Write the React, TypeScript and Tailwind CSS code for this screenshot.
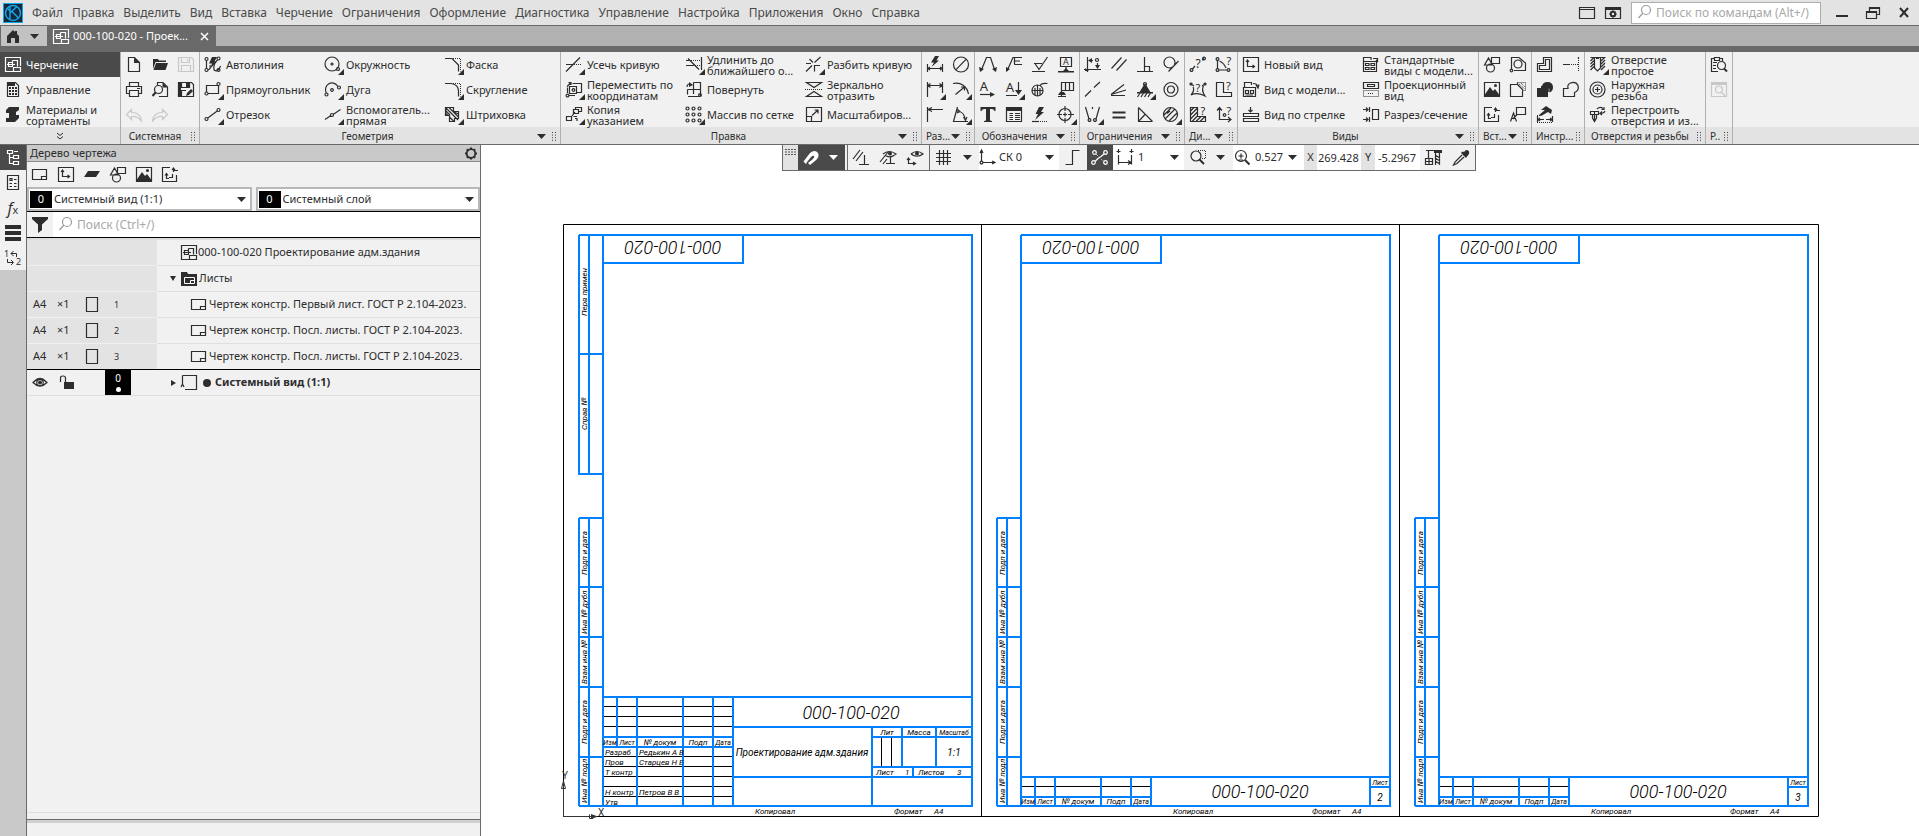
import { useState } from 'react';
import type { ReactNode } from 'react';

interface Glyph {
  s?: string; // stroked
  f?: string; // filled
  d?: string; // dotted
  b?: string; // bold stroke
  t?: { x: number; y: number; v: string; size: number }; // letter inside the icon
}

// circle as a sub-path
const o = (x: number, y: number, r: number) =>
  `M${x - r} ${y}a${r} ${r} 0 1 0 ${2 * r} 0a${r} ${r} 0 1 0 ${-2 * r} 0z`;

// every glyph lives on an 18x17 grid
const glyphs: Record<string, Glyph> = {
  drawing: {
    s: 'M16.5 10V1.5H1.5V15.5H9.5M9.5 11.5H16.5V15.5H9.5zM8.5 4.5H13.5V10.5M8.5 4.5V10.5H4.5V6.5H8.5M3 8.5H11M9.5 11.5V15.5',
  },
  management: {
    s: 'M3.5 1.5H11.5L14.5 4.5V15.5H3.5z',
    f: 'M4 2h7v3H4zM5 6h2v2H5zM8 6h2v2H8zM11 6h2v2h-2zM5 9h2v2H5zM8 9h2v2H8zM11 9h2v2h-2zM5 12h2v2H5zM8 12h2v2H8zM11 12h2v2h-2z',
  },
  materials: { f: 'M5 1H15V4L12 6V9H15V12L11 16H2V12H5V7H2V4z' },
  file: { s: 'M3.5 1.5H9.5L14.5 6.5V15.5H3.5z', f: 'M9 1.5L15 7H9z' },
  open: { f: 'M2 3H7L8 4.5H15V6H4.5L2 13zM5 7H17L14.5 14H2.5z' },
  save: { s: 'M1.5 1.5H14.5L16.5 3.5V15.5H1.5zM4.5 1.5V6.5H12.5V1.5M4.5 15.5V9.5H13.5V15.5M10.5 3V5' },
  saveas: {
    s: 'M1.5 1.5H14.5L16.5 3.5V15.5H1.5zM4.5 1.5V6.5H12.5V1.5M4.5 15.5V9.5H9',
    f: 'M9 2h3v4H9zM9 15l1-3 4-4 2 2-4 4zM2 2h2v13H2z',
  },
  print: { s: 'M4.5 5V1.5H13.5V5M4.5 12.5H1.5V5.5H16.5V12.5H13.5M4.5 9.5H13.5V15.5H4.5zM12 7.5H15' },
  preview: { s: 'M6.5 4V1.5H12L16.5 6V15.5H8' + o(7.5, 8.5, 4), b: 'M4.5 11.5L1.5 15', f: 'M11.5 1.5L16.5 6.5H11.5z' },
  undo: { s: 'M6.5 3.5L1.5 8.5L6.5 13.5V10.5C11 10 14 12 16.5 15C16 9 12 6.5 6.5 6.5z' },
  redo: { s: 'M11.5 3.5L16.5 8.5L11.5 13.5V10.5C7 10 4 12 1.5 15C2 9 6 6.5 11.5 6.5z' },
  autoline: {
    s: o(2.5, 3, 1.5) + o(2.5, 14, 1.5) + o(14.5, 2.5, 1.5) + o(14.5, 14, 1.5) + 'M2.5 4.5V12.5M4 14Q7 13 6 9M13.5 4Q9 8 10 14Q14 17 16.5 10',
    f: 'M8 1H13L10.5 5.5H13L6 13L8 7.5H5z',
  },
  rectangle: { s: 'M2.5 11V4.5H13M14.5 5V12.5H4' + o(14.5, 3, 1.5) + o(2.5, 12.5, 1.5) },
  segment: { s: 'M3.8 12L13.2 5' + o(14.5, 4, 1.5) + o(2.5, 13, 1.5) },
  circle: { s: o(8, 8, 7) + o(8, 8, 1) + o(14, 13, 1.5) },
  arc: { s: 'M2.5 12A6.5 6.5 0 0 1 13.5 5' + o(8, 9, 1.3) + o(2.5, 13.5, 1.5) + o(15, 6.5, 1.5) },
  auxline: { s: 'M1 13.5L6.5 9.8M9.5 8.2L16.5 3.5' + o(8, 9, 1.5) },
  chamfer: { s: 'M1 2.5H8L14.5 9V15.5', d: 'M9 2.5H16.5V15.5' },
  fillet: { s: 'M1 2.5H7Q14.5 3.5 14.5 10V15.5', d: 'M9 2.5H16.5V15.5' },
  hatch: {
    s: 'M1.5 1.5H9.5V5.5H14.5V12.5H10.5V15.5H5.5V9.5H1.5zM1.5 4.5L6 9M1.5 1.5L14 14M5 1.5L14.5 11M5.5 11L10 15.5M9 5.5L14.5 8M1.5 7L4 9.5',
  },
  trim: { s: 'M1 15.5L15 1.5M1 8.5H8', d: 'M9 8.5H17' },
  extend: { s: 'M3 2.5L14 13.5M16.5 1V14M1 4.5H5M1 9.5H9', d: 'M6 4.5H16M10 9.5H16' },
  split: { s: 'M1 15.5L7 9.5M9.5 6.5L15.5 1M4.5 3L8 6.5M1 7.5H6M9.5 15.5V9.5H15' },
  movecoord: {
    s: 'M7.5 2.5H16.5V11.5H12M4.5 5.5H11.5V12.5H4.5zM2.5 12V6.5M4 14.5H10' + o(2.5, 14.5, 1.4) + o(8.5, 9, 1.3) + 'M2 5.5L6 1.5M6 4V1.5H3.5',
  },
  rotate: { s: 'M8.5 1.5H15.5V15.5H3M8.5 1.5V13M2.5 8.5H15.5M2.5 8.5V13.5M2 6C2 3 4 2.5 6.5 3.5' + o(15, 14, 1.4), f: 'M4 1L8 4L4 6z' },
  mirror: { s: 'M1.5 1.5H16.5L9 6.5zM1.5 15.5H16.5L9 10.5z', d: 'M0 8.5H18' },
  copyby: { s: 'M8.5 3.5H13.5V7.5H8.5zM10.5 3.5V1.5H16.5V5.5H13.5M1.5 10.5H6.5V14.5H1.5zM7 10L10 6M10 12.5H12V15M8.5 10.5H12' },
  array: {
    s: [2.5, 8.5, 14.5].map((x) => [2.5, 8.5, 14.5].map((y) => o(x, y, 1.5)).join('')).join(''),
  },
  scale: { s: 'M1.5 1.5H16.5V15.5H1.5zM1.5 10.5H6.5V15.5M7 9.5L13 4M9.5 4H13V7.5' },
  autodim: { s: 'M1.5 8V16M16.5 8V16M2 12.5H16M4 11L2 12.5L4 14M14 11L16 12.5L14 14', f: 'M9 0H13L10.5 4.5H13L5.5 11L8 6.5H5z' },
  diameter: { s: o(9, 8.5, 7.5) + 'M3.8 13.8L14.2 3.2' },
  linear: { s: 'M1.5 1V16M16.5 1V12M2 4.5H16M4.5 2.5L2 4.5L4.5 6.5M13.5 2.5L16 4.5L13.5 6.5' },
  radial: { s: 'M1 2.5C9 1 15 5 16.5 13M3.5 13.5L12.5 6M9 6H12.5V9.5' },
  ordinate: { s: 'M1.5 1V16M2 3.5H17M6 1.5L2 3.5L6 5.5' },
  angular: { s: 'M5.5 1L1.5 15.5H16M4.5 5C10 5 13 9 13.5 15M5 3L8 5.5L5 7M11.5 11L13.5 14.5L15 11' },
  fan: { s: 'M2 15L7.5 1.5H11.5L16 15', f: 'M0 11L5 13L1 16zM18 11L13 13L17 16z' },
  leader: { s: 'M2 15L8 1.5H17M9.5 8.5H17M9.5 1.5V8.5M9.5 5H15', f: 'M1 11L5 13L1 16z' },
  rough: { s: 'M3 7.5H11M4 7.5L8 13.5L16.5 1M1 15.5H14' },
  base: { s: 'M3.5 1.5H14.5V10.5H3.5zM9 10.5V14', f: 'M9 12L12 15H17V16.5H1V15H6z', t: { x: 9, y: 9, v: 'A', size: 9 } },
  arrowA: { s: 'M1 13.5H15', f: 'M11 11L16 13.5L11 16z', t: { x: 5, y: 10, v: 'A', size: 13 } },
  sectionA: { s: 'M13.5 1V12M1 14.5H12', f: 'M10 9H17L13.5 14z', t: { x: 5, y: 11, v: 'A', size: 13 } },
  node: { s: o(6.5, 9.5, 5.5) + 'M1 9.5H12M6.5 4V15M9 5Q10 1.5 16.5 2.5M9 7V14M4 7V14' },
  flag: { s: 'M4.5 15V1.5H16.5V9.5H4.5M8.5 1.5V9.5M12.5 1.5V9.5M4.5 9.5V15', f: 'M1 14H9L7 11H3zM1 15h8v1H1z' },
  text: { f: 'M1.5 1H16.5V5H15.5Q15 3 12.5 3H11V14Q11 15 13 15V16H5V15Q7 15 7 14V3H5.5Q3 3 2.5 5H1.5z' },
  table: { s: 'M1.5 1.5H16.5V15.5H1.5zM2 4.5H16M4.5 7.5H8M10 7.5H15M4.5 9.5H8M10 9.5H15M4.5 11.5H8M10 11.5H15M4.5 13.5H8M10 13.5H15', f: 'M2 2h14v2H2z' },
  quick: { s: 'M1 15.5H8', d: 'M9 15.5H17', f: 'M8 1H13L10 6H13L4 14L7 8H4.5z' },
  center: { s: o(8, 8.5, 6) + 'M8 0V5M8 12V17M0 8.5H5M11 8.5H17M6 8.5H10M8 6.5V10.5' },
  fix: { s: 'M3.5 1V16M0 13.5H17M5 4.5H9M13.5 7V12' + o(13, 4, 1.5), f: 'M8 2L4 4.5L8 7zM11 9L13.5 13L16 9zM1 12L5 15H1z' },
  parallel: { s: 'M1.5 12.5L11.5 1.5M6.5 14.5L16.5 3.5' },
  perpend: { s: 'M8.5 1V15M1 15.5H17M8.5 10.5H13.5V15' },
  tangent: { s: o(7.5, 6.5, 5.5) + 'M6.5 15.5L16.5 5' },
  collinear: { s: 'M1 15.5L7 9.5M10 6.5L16 1' },
  converge: { s: 'M1 13.5L14 3.5M1 13.5L16 9M1 14.5H15' },
  fixed: { f: 'M9 2L15 12H3zM1 11H17V12.5H1z', s: 'M4 12L1.5 16M7.5 12L5 16M11 12L8.5 16M14.5 12L12 16' + o(9, 3, 1.5) },
  concentric: { s: o(9, 8.5, 7) + o(9, 8.5, 3.5) },
  symmetric: { s: 'M1.5 1L5 13M15.5 1L12 13M8.5 1V3' + o(5.5, 14, 1.4) + o(11, 14, 1.4) },
  equal: { b: 'M2.5 6.5H15.5M2.5 11.5H15.5' },
  angle: { s: 'M2.5 1.5V15.5H16.5M2.5 1.5L16.5 15.5M2.5 15.5L9 8.5' },
  zebra: { s: o(8.5, 8.5, 7) + 'M2 9L9 2M3 13L13 3M7 15L15 7M5 7.5L8 5' },
  dist: { s: 'M3.5 13L6 10M13 4L15 2.5' + o(2.5, 14, 1.4) + o(15, 2.5, 1.4), t: { x: 9, y: 12, v: '?', size: 12 } },
  angleq: { s: 'M2.5 13V4M4 14H12M4.5 5Q9 7 11 12' + o(2.5, 3, 1.4) + o(2.5, 14, 1.4) + o(13.5, 14, 1.4), t: { x: 14, y: 9, v: '?', size: 11 } },
  surface: { s: 'M2 3L5 5M16 3L13 5M4 6Q6 9 2 14Q8 11 16 15Q12 9 14.5 5' + o(2, 3, 1) + o(16, 3, 1), t: { x: 9, y: 11, v: '?', size: 11 } },
  area: { s: 'M8.5 1.5H1.5V15.5H16.5V11.5H8.5V1.5', t: { x: 13.5, y: 9, v: '?', size: 11 } },
  mass: { s: 'M8.5 1.5H1.5V15.5H16.5V10.5H8.5zM1.5 5L5 1.5M1.5 9L8.5 2M1.5 13L8.5 6M3 15.5L8.5 10M7 15.5L12 10.5M11 15.5L16 10.5', t: { x: 14, y: 9, v: '?', size: 11 } },
  coordq: { s: 'M4.5 2V13.5H16M2 4.5L4.5 1.5L7 4.5M13 11L16 13.5L13 16' + o(9.5, 9, 1.3), t: { x: 14, y: 9, v: '?', size: 11 } },
  newview: { s: 'M1.5 1.5H16.5V15.5H1.5zM5.5 4V10.5H12M4 6L5.5 4L7 6M10.5 9L12.5 10.5L10.5 12' },
  modelview: { s: 'M2.5 6V1.5H9.5V4M1.5 6.5H13.5V15.5H1.5zM3.5 9.5H6.5V12.5H3.5zM8.5 9.5H11.5V12.5H8.5zM11 2.5Q15 2.5 15.5 5M14 4L16 7L17 3.5M3.5 14H11' },
  arrowview: { s: 'M1.5 7.5H16.5V10.5H1.5zM1.5 12.5H16.5V15.5H1.5zM8.5 1V6M6.5 4L8.5 6L10.5 4' },
  stdviews: { s: 'M1.5 5V1.5H9V4M1.5 5.5H14.5V15.5H1.5zM3.5 7.5H7V9.5H3.5zM9 7.5H12.5V9.5H9zM3.5 11.5H7V13.5H3.5zM9 11.5H12.5V13.5H9zM11 2.5H15.5V5M14 4L16 6' },
  projview: { s: 'M1.5 1.5H16.5V7.5H1.5zM5.5 3.5H12.5V5.5H5.5z', d: 'M1.5 9.5H16.5V15.5H1.5zM6 12.5H12' },
  section: { s: 'M7.5 1V6M7.5 11V16M10.5 3.5H16.5V13.5H10.5zM1 3.5H6M1 13.5H6M4 1.5L6 3.5L4 5.5M4 11.5L6 13.5L4 15.5' },
  shapes: { s: 'M5.5 2L9.5 9H1.5zM8.5 1.5H16.5V7.5H8.5z' + o(7.5, 12, 4) },
  fragment: { s: 'M2.5 14V1.5H10L16.5 7V14.5H5' + o(9, 8, 4) + o(2.5, 14.5, 1.3) },
  picture: { s: 'M1.5 1.5H16.5V15.5H1.5z', f: 'M1.5 14L7 6L10 10L12 8L16.5 14V16H1.5z' + o(12.5, 4.5, 1.5) },
  viewfrag: { s: 'M8.5 3.5H1.5V15.5H13.5V9.5M8.5 3.5V1.5M8.5 3.5L14 9', d: 'M8.5 1.5H16.5V9.5H13M10 3L16 8M12 2L16 6' },
  inout: { s: 'M9 1.5H1.5V15.5H15.5V9M12.5 6V2.5M12.5 4.5H17M11 4L12.5 2L14 4M5.5 8V12.5H8M11.5 8V11.5H8M4 9.5L5.5 7.5L7 9.5' },
  callout: { s: 'M7.5 1.5H16.5V8.5H7.5zM8 8.5L4 13M1.5 15.5L4.5 7L7.5 15.5M2.5 12.5H6.5' },
  contour: { s: 'M7.5 1.5H15.5V15.5H1.5V7.5H7.5zM9.5 3.5H13.5V13.5H3.5V9.5H9.5z' },
  tocurve: { s: 'M1 8.5H8M16.5 1V3', d: 'M9 8.5H16M16.5 4V16' },
  union: { f: 'M1 7H5V5H6Q7 1 11.5 1Q17 1 17 6.5Q17 10 13.5 11.5V7.5H12V16H1z', s: 'M6 5.8H12.8V11' },
  merge: { s: 'M1.5 7.5H6Q5 3 9 1.8Q14 .5 16 4.5Q17.5 9.5 12.5 11.5V15.5H1.5z' },
  repair: { s: 'M1.5 10V16M16.5 10V16M2 13.5H8M10 13.5H16M4 12L2 13.5L4 15M14 12L16 13.5L14 15', f: 'M5 4L10 0L16 4L15 8L12 6L5 10L3 9L9 4z', d: 'M1 16.5H17M1 9.5H5' },
  hole: { s: 'M5.5 1.5V12L8.5 15L11.5 12V1.5M1.5 1.5H16.5M1.5 5L4.5 2M1.5 8L5 4.5M1.5 11L5 7.5M1.5 14L5 10.5M12 5L15.5 1.5M12 8L16 4M12 11L16 7M12 14L16 10M5.5 1V12M11.5 1V12M7 2.5H10' },
  thread: { s: o(8.5, 8.5, 7.5) + o(8.5, 8.5, 4.5) + 'M8.5 6V11M6 8.5H11' },
  rebuild: { s: 'M1.5 5.5H9.5V8.5H1.5zM3.5 8.5V12L5.5 15.5L7.5 12V8.5M5.5 5.5V15M8 3Q11 0 14 2.5M16 5Q15 8 11.5 7M12.5 3.5H15V1M13 5.5L11 7.5L13 9' },
  report: { s: 'M8 15.5H1.5V2.5H4.5M9.5 2.5H12.5V5M4.5 1.5H9.5V4.5H4.5z' + o(11.5, 9.5, 4), b: 'M14 12.5L17 15.5', f: 'M3 6h4v1H3zM3 9h3v1H3zM3 12h3v1H3z' },
  webfind: { s: 'M1.5 1.5H16.5V15.5H1.5zM1.5 3.5H16.5' + o(9, 8.5, 3.5) + 'M11.5 11L15 15', f: 'M1 1h16v3H1z' },
  sheet: { s: 'M1.5 3.5H15.5V13.5H1.5zM10.5 13.5V10.5H15.5' },
  layer: { f: 'M5 5H17L13 11H1z' },
  tree: { s: 'M3.5 1.5H8.5V4.5H3.5zM9.5 6.5H14.5V9.5H9.5zM9.5 12.5H14.5V15.5H9.5zM5.5 4.5V14.5H9M5.5 8.5H9M10 2.5H14' },
  props: { s: 'M3.5 1.5H14.5V15.5H3.5zM6 4.5H8V6.5H6zM10 5.5H12.5M5.5 9.5H8M10 9.5H12.5M5.5 12.5H8M10 12.5H12.5' },
  layers: { f: 'M1 1h16v4H1zM1 7h16v4H1zM1 13h16v4H1z' },
  snapsT: { s: 'M1 10L8 1M4 12L11 3M12.5 6V15.5M7 15.5H17' },
  snapsEye: { s: 'M1 13L9 3M4 15L8 10M11.5 8V14.5M7 14.5H16M4 5Q10 0 17 5Q11 10 6 6', f: o(11, 4.5, 2) },
  coordEye: { s: 'M2.5 9V14.5H9M1 11L2.5 9L4 11M7 13L9.5 14.5L7 16M5 5Q11 0 17 5Q11 9.5 5 5', f: o(11, 4.5, 2) },
  grid: { s: 'M5.5 1V16M9.5 1V16M13.5 1V16M2 4.5H17M2 8.5H17M2 12.5H17' },
  coord: { s: 'M2.5 2V12M4 13.5H16M1 4L2.5 1L4 4M13 12L16 13.5L13 15' + o(2.5, 13.5, 1.4) },
  ortho: { s: 'M1.5 15.5H8.5V1.5H15.5' },
  nodes: { s: 'M4 12.5L7 9.5L10 7.5L13.2 4.7' + o(3.5, 3.5, 1.8) + o(14.5, 3.5, 1.8) + o(2.5, 13.5, 1.8) + o(14.5, 13.5, 1.8), d: 'M5 5L7.5 7.5M10.5 10.5L12.5 12' },
  step: { s: 'M2.5 6V15.5M15.5 6V15.5M3 13.5H15M12 11.5L15 13.5L12 15.5M2.5 0V4M.5 2.5H4.5M15.5 0V4M13.5 2.5H17.5' },
  zoomarea: { s: o(7, 7, 5), d: 'M9 1.5H16.5V9.5H12', b: 'M10.5 10.5L15 15' },
  zoomin: { s: o(7, 7, 5.5) + 'M4.5 7H9.5M7 4.5V9.5M4.5 11H9', b: 'M11 11L15.5 15.5' },
  crane: { s: 'M1 1.5H17M3.5 2V9M.5 9.5H7.5V15.5H.5zM.5 12.5H7.5M4 9.5V15.5M10.5 3V16M14.5 3V16M10 6L15 9M10 9L15 12M10 12L15 15', f: 'M9 2h8v2H9z' },
  picker: { s: 'M10 6L3 13L1.5 16L5 14.5L12 8', f: 'M9 4L14 9L15 7.5L17 5Q18 1 14 1L12 3L10.5 2.5z' },
  gear: {
    s: o(9, 8.5, 4) + o(9, 8.5, 4.6),
    b: 'M9 2.5V4.5M9 12.5V14.5M3 8.5H5M13 8.5H15M4.8 4.3L6 5.5M12 11.5L13.2 12.7M13.2 4.3L12 5.5M6 11.5L4.8 12.7',
  },
  funnel: { f: 'M1 1H17V3L11 8.5V14L7 17V8.5L1 3z' },
  lens: { s: o(10, 6, 4.5) + 'M6.5 9.5L2.5 14' },
  eye: { s: 'M2 8.5Q9 1.5 16 8.5Q9 15.5 2 8.5z' + o(9, 8.5, 3.2) + 'M3 7.5Q9 1.5 15 7.5', f: o(9, 8.5, 2) },
  lock: { f: 'M6 8H16V15H6z', s: 'M2.5 8V4Q2.5 2 5 2Q7.5 2 7.5 4V8' },
  view: { s: 'M2.5 1.5H16.5V15.5H5M2.5 1.5V11M1 13L2.5 10L4 13' },
  page: { s: 'M3.5 1.5H14.5V15.5H3.5z' },
  window: { s: 'M1.5 3.5H16.5V14.5H1.5zM1.5 5.5H16.5' },
  windowgear: { s: 'M1.5 3.5H16.5V14.5H1.5zM1.5 5.5H16.5' + o(9, 10, 2), b: 'M9 6.5V8.5M9 11.5V13.5M5.5 10H7.5M10.5 10H12.5M6.5 7.5L8 9M10 11L11.5 12.5M11.5 7.5L10 9M8 11L6.5 12.5', f: 'M1 3h16v2.5H1z' },
  home: { f: 'M3 8L9 2L11 4V3H13V6L15 8V15H11V10H7V15H3z' },
  magnet: { f: 'M4 15L1.5 12.5L8 4Q13 0 16 4Q18 8 13 12L8 16L6 14L11 10Q13 8 12 7Q11 6 9 8L5 13z' },
  minimize: { b: 'M3 12H15' },
  restore: { s: 'M2.5 7.5H12.5V14.5H2.5zM5.5 7V3.5H15.5V10.5H13', f: 'M2 7h11v2H2zM5 3h11v2H5z' },
  close: { b: 'M5 4L13 13M13 4L5 13' },
};

function Icon({ name }: { name: string }) {
  const g = glyphs[name];
  return (
    <svg viewBox="0 0 18 17" className="h-[17px] w-[18px] shrink-0 overflow-visible" fill="none" stroke="currentColor" aria-hidden="true">
      {g.f && <path d={g.f} fill="currentColor" stroke="none" />}
      {g.s && <path d={g.s} strokeWidth="1.2" />}
      {g.d && <path d={g.d} strokeDasharray="1 1" />}
      {g.b && <path d={g.b} strokeWidth="2" />}
      {g.t && (
        <text x={g.t.x} y={g.t.y} fontSize={g.t.size} textAnchor="middle" fill="currentColor" stroke="none">
          {g.t.v}
        </text>
      )}
    </svg>
  );
}

function Caret() {
  return (
    <svg viewBox="0 0 9 5" className="h-[5px] w-[9px] shrink-0" aria-hidden="true">
      <path d="M0 0H9L4.5 5z" fill="currentColor" />
    </svg>
  );
}

function Grip() {
  return (
    <svg viewBox="0 0 5 9" className="h-[9px] w-[5px] shrink-0" aria-hidden="true">
      <path d="M.5 0V9M3.5 0V9" stroke="#444" strokeDasharray="1 1.6" />
    </svg>
  );
}

interface Tool {
  icon: string;
  label?: string;
  more?: boolean;
  off?: boolean;
}

interface Group {
  title: string;
  caret?: boolean;
  cols: string;
  tools: Tool[];
}

const t = (icon: string, label?: string, more?: boolean): Tool => ({ icon, label, more });
const m = (icon: string, label?: string): Tool => t(icon, label, true);

const groups: Group[] = [
  {
    title: 'Системная',
    cols: 'grid-cols-[repeat(3,26px)]',
    tools: [t('file'), t('open'), { icon: 'save', off: true }, t('print'), t('preview'), t('saveas'), { icon: 'undo', off: true }, { icon: 'redo', off: true }],
  },
  {
    title: 'Геометрия',
    caret: true,
    cols: 'grid-cols-[repeat(3,120px)]',
    tools: [
      t('autoline', 'Автолиния'), m('circle', 'Окружность'), m('chamfer', 'Фаска'),
      m('rectangle', 'Прямоугольник'), m('arc', 'Дуга'), m('fillet', 'Скругление'),
      m('segment', 'Отрезок'), m('auxline', 'Вспомогатель...\nпрямая'), m('hatch', 'Штриховка'),
    ],
  },
  {
    title: 'Правка',
    caret: true,
    cols: 'grid-cols-[repeat(3,120px)]',
    tools: [
      m('trim', 'Усечь кривую'), m('extend', 'Удлинить до\nближайшего о...'), m('split', 'Разбить кривую'),
      m('movecoord', 'Переместить по\nкоординатам'), t('rotate', 'Повернуть'), t('mirror', 'Зеркально\nотразить'),
      m('copyby', 'Копия\nуказанием'), m('array', 'Массив по сетке'), t('scale', 'Масштабиров...'),
    ],
  },
  {
    title: 'Раз...',
    caret: true,
    cols: 'grid-cols-[repeat(2,26px)]',
    tools: [t('autodim'), t('diameter'), m('linear'), m('radial'), t('ordinate'), m('angular')],
  },
  {
    title: 'Обозначения',
    caret: true,
    cols: 'grid-cols-[repeat(4,26px)]',
    tools: [
      t('fan'), t('leader'), t('rough'), t('base'),
      t('arrowA'), m('sectionA'), t('node'), t('flag'),
      t('text'), t('table'), t('quick'), m('center'),
    ],
  },
  {
    title: 'Ограничения',
    caret: true,
    cols: 'grid-cols-[repeat(4,26px)]',
    tools: [
      t('fix'), t('parallel'), t('perpend'), t('tangent'),
      t('collinear'), t('converge'), m('fixed'), t('concentric'),
      m('symmetric'), t('equal'), t('angle'), m('zebra'),
    ],
  },
  {
    title: 'Ди...',
    caret: true,
    cols: 'grid-cols-[repeat(2,26px)]',
    tools: [t('dist'), t('angleq'), t('surface'), t('area'), t('mass'), t('coordq')],
  },
  {
    title: 'Виды',
    caret: true,
    cols: 'grid-cols-[repeat(2,120px)]',
    tools: [
      t('newview', 'Новый вид'), t('stdviews', 'Стандартные\nвиды с модели...'),
      t('modelview', 'Вид с модели...'), t('projview', 'Проекционный\nвид'),
      t('arrowview', 'Вид по стрелке'), t('section', 'Разрез/сечение'),
    ],
  },
  {
    title: 'Вст...',
    caret: true,
    cols: 'grid-cols-[repeat(2,26px)]',
    tools: [t('shapes'), t('fragment'), t('picture'), t('viewfrag'), t('inout'), t('callout')],
  },
  {
    title: 'Инстр...',
    cols: 'grid-cols-[repeat(2,26px)]',
    tools: [t('contour'), t('tocurve'), t('union'), t('merge'), t('repair')],
  },
  {
    title: 'Отверстия и резьбы',
    cols: 'grid-cols-[120px]',
    tools: [m('hole', 'Отверстие\nпростое'), t('thread', 'Наружная\nрезьба'), t('rebuild', 'Перестроить\nотверстия и из...')],
  },
  {
    title: 'Р..',
    cols: 'grid-cols-[26px]',
    tools: [t('report'), { icon: 'webfind', off: true }],
  },
];

const menu = [
  'Файл', 'Правка', 'Выделить', 'Вид', 'Вставка', 'Черчение', 'Ограничения', 'Оформление',
  'Диагностика', 'Управление', 'Настройка', 'Приложения', 'Окно', 'Справка',
];

const modes = [
  { icon: 'drawing', label: 'Черчение' },
  { icon: 'management', label: 'Управление' },
  { icon: 'materials', label: 'Материалы и\nсортаменты' },
];

function ToolButton({ icon, label, more, off }: Tool) {
  return (
    <button className={`relative flex h-[25px] items-center text-left ${off ? 'text-[#c8c8c8]' : ''}`}>
      <span className="flex w-[26px] shrink-0 justify-center">
        <Icon name={icon} />
      </span>
      {more && (
        <svg viewBox="0 0 6 6" className="absolute top-[17px] left-[18px] size-[6px]" aria-hidden="true">
          <path d="M6 0V6H0z" fill="currentColor" />
        </svg>
      )}
      {label && <span className="leading-[11px] whitespace-pre">{label}</span>}
    </button>
  );
}

function Ribbon() {
  const [mode, setMode] = useState('Черчение');

  return (
    <div className="flex overflow-hidden border-b border-[#6a6a6a] bg-[#f1f1f1]">
      <div className="w-[121px] shrink-0 border-r border-[#b0b0b0]">
        {modes.map((item) => (
          <button
            key={item.label}
            onClick={() => setMode(item.label)}
            className={`flex h-[25px] w-full items-center text-left ${mode === item.label ? 'bg-[#4a4a4a] text-white' : ''}`}
          >
            <span className="flex w-[26px] shrink-0 justify-center">
              <Icon name={item.icon} />
            </span>
            <span className="leading-[11px] whitespace-pre">{item.label}</span>
          </button>
        ))}
        <button className="flex h-[17px] w-full items-center justify-center bg-[#e3e3e3]" aria-label="Ещё">
          <svg viewBox="0 0 8 8" className="size-2" fill="none" stroke="currentColor">
            <path d="M1 1L4 3.5L7 1M1 4.5L4 7L7 4.5" />
          </svg>
        </button>
      </div>
      {groups.map((group) => (
        <section key={group.title} className="flex shrink-0 flex-col border-r border-[#b0b0b0]">
          <div className={`grid h-[75px] auto-rows-[25px] ${group.cols}`}>
            {group.tools.map((tool) => (
              <ToolButton key={tool.icon} {...tool} />
            ))}
          </div>
          <div className="flex h-[17px] items-center gap-[6px] bg-[#e3e3e3] pt-[2px] pr-[3px] pl-1">
            <h2 className="w-0 flex-1 text-center text-[10px] leading-[15px] whitespace-nowrap">{group.title}</h2>
            {group.caret && <Caret />}
            <Grip />
          </div>
        </section>
      ))}
      <div className="flex flex-1 flex-col justify-end">
        <div className="h-[17px] bg-[#e3e3e3]" />
      </div>
    </div>
  );
}

function TitleBar() {
  return (
    <header className="flex h-[26px] items-center border-b border-[#6a6a6a] bg-[#e3e3e3] pl-[3px]">
      <svg viewBox="0 0 20 20" className="mr-[9px] size-5 shrink-0" aria-hidden="true">
        <rect x="0.5" y="0.5" width="19" height="19" fill="#16283a" stroke="#12a5e8" />
        <g fill="none" stroke="#12a5e8" strokeWidth="1.5">
          <circle cx="10" cy="10" r="7.5" />
          <path d="M7 4V16M7 10L14 3.5M9 8.5L15.5 15M4 5L7 8" />
        </g>
      </svg>
      <nav className="flex gap-[9px] text-xs text-[#4a4a4a]">
        {menu.map((item) => (
          <button key={item}>{item}</button>
        ))}
      </nav>
      <div className="ml-auto flex items-center">
        <button aria-label="Окно"><Icon name="window" /></button>
        <button className="ml-2" aria-label="Настройка интерфейса"><Icon name="windowgear" /></button>
        <label className="ml-[9px] flex h-[22px] w-[190px] items-center border border-[#adadad] bg-white pl-1 text-[#9a9a9a]">
          <Icon name="lens" />
          <input aria-label="Поиск по командам" placeholder="Поиск по командам (Alt+/)" className="ml-[2px] w-0 flex-1 text-xs outline-none placeholder:text-[#a8a8a8]" />
        </label>
        <button className="ml-[5px] flex w-[31px] justify-center" aria-label="Свернуть"><Icon name="minimize" /></button>
        <button className="flex w-[31px] justify-center" aria-label="Восстановить"><Icon name="restore" /></button>
        <button className="flex w-[31px] justify-center" aria-label="Закрыть"><Icon name="close" /></button>
      </div>
    </header>
  );
}

function TabBar() {
  return (
    <div className="border-b-[6px] border-[#696969] bg-[#b1b1b1]">
      <div className="flex h-5">
        <button className="flex w-[47px] items-center gap-2 border-l border-[#696969] bg-[#c2c2c2] pl-[3px]" aria-label="Главная">
          <Icon name="home" />
          <Caret />
        </button>
        <div className="flex w-[169px] items-center bg-[#696969] pl-[5px] text-white">
          <Icon name="drawing" />
          <span className="ml-[3px] flex-1 whitespace-nowrap">000-100-020 - Проек...</span>
          <button className="mr-[2px]" aria-label="Закрыть вкладку">
            <svg viewBox="0 0 18 17" className="h-[17px] w-[18px]" fill="none" stroke="currentColor">
              <path d="M5 5L12 12M12 5L5 12" strokeWidth="1.5" />
            </svg>
          </button>
        </div>
      </div>
    </div>
  );
}

function SideBar() {
  return (
    <div className="w-[26px] shrink-0 bg-[#c9c9c9]">
      <div className="flex flex-col bg-[#f1f1f1]">
        <button className="flex h-[25px] items-center justify-center bg-[#4a4a4a] text-white" aria-label="Дерево"><Icon name="tree" /></button>
        <button className="flex h-[25px] items-center justify-center" aria-label="Параметры"><Icon name="props" /></button>
        <button className="flex h-[25px] items-center justify-center font-['Open_Sans'] text-base leading-none italic">
          f<span className="mt-1 text-[11px] not-italic">x</span>
        </button>
        <button className="flex h-[25px] items-center justify-center" aria-label="Слои"><Icon name="layers" /></button>
        <button className="flex h-[25px] items-center justify-center" aria-label="Нумерация">
          <svg viewBox="0 0 18 17" className="h-[17px] w-[18px] overflow-visible" fill="none" stroke="currentColor">
            <text x="0" y="8" fontSize="9" fill="currentColor" stroke="none">1</text>
            <text x="12" y="16" fontSize="9" fill="currentColor" stroke="none">2</text>
            <path d="M7 4.5H12.5V8M9.5 2L7 4.5L9.5 7M3.5 10V13.5H9M7 11L9.5 13.5L7 16" />
          </svg>
        </button>
      </div>
    </div>
  );
}

function Combo({ label, value }: { label: string; value: string }) {
  return (
    <label className="relative flex h-6 flex-1 items-center border-2 border-[#b8b8b8] bg-white pl-px">
      <span className="flex h-[17px] w-[22px] items-center justify-center bg-black text-white">0</span>
      <select aria-label={label} className="w-0 flex-1 appearance-none pl-[2px] outline-none">
        <option>{value}</option>
      </select>
      <span className="pointer-events-none absolute right-[4px]">
        <Caret />
      </span>
    </label>
  );
}

const sheetRows = [
  { n: 1, label: 'Чертеж констр. Первый лист. ГОСТ Р 2.104-2023.' },
  { n: 2, label: 'Чертеж констр. Посл. листы. ГОСТ Р 2.104-2023.' },
  { n: 3, label: 'Чертеж констр. Посл. листы. ГОСТ Р 2.104-2023.' },
];

function TreeRow({ left, children }: { left?: ReactNode; children: ReactNode }) {
  return (
    <li className="flex h-[26px]">
      <div className="flex w-[130px] shrink-0 items-center border-b border-[#f1f1f1] bg-[#e3e3e3]">{left}</div>
      <div className="flex flex-1 items-center overflow-hidden border-b border-[#e0e0e0] whitespace-nowrap">{children}</div>
    </li>
  );
}

function TreePanel() {
  return (
    <aside className="flex w-[455px] shrink-0 flex-col border-x border-[#6a6a6a] bg-[#f1f1f1]">
      <div className="flex h-[17px] items-center justify-between border-b border-[#8a8a8a] bg-[#c9c9c9] pl-[3px]">
        <h1>Дерево чертежа</h1>
        <button aria-label="Настройка панели"><Icon name="gear" /></button>
      </div>
      <div className="flex h-[25px] items-center">
        {['sheet', 'newview', 'layer', 'shapes', 'picture', 'inout'].map((name) => (
          <button key={name} className="flex w-[26px] justify-center"><Icon name={name} /></button>
        ))}
      </div>
      <div className="flex gap-1">
        <Combo label="Вид" value="Системный вид (1:1)" />
        <Combo label="Слой" value="Системный слой" />
      </div>
      <div className="flex h-[27px] border-y border-black bg-white">
        <button className="flex w-[26px] items-center justify-center bg-[#f1f1f1]" aria-label="Фильтр"><Icon name="funnel" /></button>
        <label className="flex flex-1 items-center pl-1 text-[#9a9a9a]">
          <Icon name="lens" />
          <input aria-label="Поиск" placeholder="Поиск (Ctrl+/)" className="ml-[2px] flex-1 text-xs outline-none placeholder:text-[#a8a8a8]" />
        </label>
      </div>
      <ul className="border-t-2 border-[#dcdcdc]">
        <TreeRow>
          <span className="pl-[23px]"><Icon name="drawing" /></span>000-100-020 Проектирование адм.здания
        </TreeRow>
        <TreeRow>
          <svg viewBox="0 0 6 6" className="ml-[13px] size-[6px]"><path d="M0 0H6L3 5z" fill="currentColor" /></svg>
          <svg viewBox="0 0 18 17" className="ml-1 h-[17px] w-[18px]" fill="none">
            <path d="M1 2H7L8 4H17V16H1z" fill="currentColor" />
            <path d="M4.5 7.5H14.5V13.5H4.5zM10.5 13.5V10.5H14.5" stroke="#fff" />
          </svg>
          <span className="ml-px">Листы</span>
        </TreeRow>
        {sheetRows.map((row) => (
          <TreeRow
            key={row.n}
            left={
              <>
                <span className="w-6 pl-[6px]">A4</span>
                <span className="ml-[6px] w-6">×1</span>
                <span className="ml-[2px]"><Icon name="page" /></span>
                <span className="ml-[13px] text-[9px]">{row.n}</span>
              </>
            }
          >
            <span className="pr-[1px] pl-[33px]"><Icon name="sheet" /></span>{row.label}
          </TreeRow>
        ))}
      </ul>
      <div className="-mt-px flex h-[26px] items-center border-t border-black">
        <span className="ml-1"><Icon name="eye" /></span>
        <span className="ml-[9px]"><Icon name="lock" /></span>
        <span className="ml-[29px] flex h-full w-[26px] flex-col items-center bg-black text-[10px] leading-[17px] text-white">
          0<i className="size-[5px] rounded-full bg-white" />
        </span>
        <svg viewBox="0 0 5 6" className="ml-[40px] h-[6px] w-[5px]"><path d="M0 0L5 3L0 6z" fill="currentColor" /></svg>
        <span className="ml-1"><Icon name="view" /></span>
        <i className="ml-[5px] size-2 rounded-full bg-[#2d2d2d]" />
        <b className="ml-1">Системный вид (1:1)</b>
      </div>
      <div className="flex-1 border-t border-b border-[#e0e0e0]" />
      <div className="h-[23px]">
        <div className="mt-[6px] h-1 border-t border-[#6a6a6a] bg-[#d0d0d0]" />
      </div>
    </aside>
  );
}

function SnapBar() {
  return (
    <div className="absolute top-0 left-[301px] flex h-[26px] items-stretch border-x border-b border-[#6a6a6a] bg-[#f1f1f1] text-[11px]">
      <span className="flex w-[15px] justify-center bg-[#e3e3e3] pt-1">
        <svg viewBox="0 0 11 6" className="h-[6px] w-[11px]"><path d="M0 .5H11M0 3H11M0 5.5H11" stroke="#555" strokeDasharray="2 1" /></svg>
      </span>
      <button className="flex w-[47px] items-center gap-[9px] bg-[#4a4a4a] pl-1 text-white" aria-label="Привязки"><Icon name="magnet" /><Caret /></button>
      <div className="ml-[2px] flex w-[83px] items-center gap-[9px] border-x border-[#6a6a6a] pl-1">
        <Icon name="snapsT" /><Icon name="snapsEye" /><Icon name="coordEye" />
      </div>
      <button className="flex w-[49px] items-center gap-[11px] pl-1" aria-label="Сетка"><Icon name="grid" /><Caret /></button>
      <label className="relative flex w-[80px] items-center bg-white">
        <Icon name="coord" />
        <select aria-label="Система координат" className="w-0 flex-1 appearance-none pl-[2px] outline-none"><option>СК 0</option></select>
        <span className="pointer-events-none absolute right-[5px]"><Caret /></span>
      </label>
      <button className="flex w-[28px] items-center justify-center" aria-label="Ортогонально"><Icon name="ortho" /></button>
      <button className="flex w-[26px] items-center justify-center bg-[#4a4a4a] text-white" aria-label="Точки"><Icon name="nodes" /></button>
      <label className="relative flex w-[71px] items-center bg-white pl-[3px]">
        <Icon name="step" />
        <select aria-label="Шаг курсора" className="w-0 flex-1 appearance-none pl-1 outline-none"><option>1</option></select>
        <span className="pointer-events-none absolute right-[5px]"><Caret /></span>
      </label>
      <button className="flex w-[49px] items-center gap-[9px] pl-[5px]" aria-label="Показать"><Icon name="zoomarea" /><Caret /></button>
      <label className="flex w-[71px] items-center gap-[3px] bg-white pl-[1px]">
        <Icon name="zoomin" />
        <input aria-label="Масштаб" defaultValue="0.527" className="w-[30px] outline-none" />
        <Caret />
      </label>
      <label className="flex items-center bg-[#e3e3e3]">
        <span className="w-[13px] text-center">X</span>
        <input defaultValue="269.428" className="h-full w-[44px] bg-white pl-px outline-none" />
      </label>
      <label className="flex items-center bg-[#e3e3e3]">
        <span className="w-[14px] text-center">Y</span>
        <input defaultValue="-5.2967" className="h-full w-[45px] bg-white pl-[3px] outline-none" />
      </label>
      <div className="flex w-[55px] items-center gap-[9px] pl-[5px]">
        <Icon name="crane" /><Icon name="picker" />
      </div>
    </div>
  );
}

interface Note {
  x: number;
  y: number;
  v: string;
  size?: number;
  rot?: number;
  mid?: boolean;
}

function Notes({ items }: { items: Note[] }) {
  return (
    <g fill="#000">
      {items.map((n) => (
        <text
          key={`${n.x}-${n.y}`}
          transform={`translate(${n.x} ${n.y}) rotate(${n.rot ?? 0})`}
          fontSize={n.size ?? 8}
          fontWeight={(n.size ?? 8) > 12 ? 300 : 400}
          textAnchor={n.mid ? 'middle' : 'start'}
        >
          {n.v}
        </text>
      ))}
    </g>
  );
}

const sideNotes: Note[] = [
  { x: 24, y: 351, v: 'Подп и дата', rot: -90 },
  { x: 24, y: 410, v: 'Инв № дубл', rot: -90 },
  { x: 24, y: 460, v: 'Взам инв №', rot: -90 },
  { x: 24, y: 520, v: 'Подп и дата', rot: -90 },
  { x: 24, y: 579, v: 'Инв № подл', rot: -90 },
  { x: 110, y: 17, v: '000-100-020', size: 18, rot: 180, mid: true },
  { x: 192, y: 590, v: 'Копировал' },
  { x: 331, y: 590, v: 'Формат' },
  { x: 371, y: 590, v: 'А4' },
];

const columnNotes = (y: number): Note[] => [
  { x: 47, y, v: 'Изм', size: 7, mid: true },
  { x: 64, y, v: 'Лист', size: 7, mid: true },
  { x: 97, y, v: '№ докум', mid: true },
  { x: 135, y, v: 'Подп', mid: true },
  { x: 160, y, v: 'Дата', size: 7, mid: true },
];

const frame = 'M40 11H409V582H16M40 11V582M40 39H180V11M16 294H40M16 294V582M26 294V582M16 363H40M16 413H40M16 463H40M16 533H40';

function FirstSheet() {
  return (
    <g>
      <path d="M40 482.5H170M40 492.5H170M40 502.5H170M40 532.5H170M40 542.5H170M40 552.5H170M40 562.5H170M40 572.5H170M318.5 513V543M328.5 513V543" stroke="#000" />
      <path
        d={frame + 'M16 11H40M16 11V250H40M26 11V250M16 130H40M40 473H409M54 473V523M74 473V582M120 473V582M150 473V582M170 473V582M40 513H170M40 523H170M170 503H409M309 503V582M309 513H409M339 503V543M373 503V543M309 543H409M170 553H409M350 543V553'}
        stroke="#0080ff"
        strokeWidth="2"
      />
      <Notes
        items={[
          ...sideNotes,
          ...columnNotes(521),
          { x: 24, y: 92, v: 'Перв примен', rot: -90 },
          { x: 24, y: 206, v: 'Справ №', rot: -90 },
          { x: 42, y: 531, v: 'Разраб' },
          { x: 42, y: 541, v: 'Пров' },
          { x: 42, y: 551, v: 'Т контр' },
          { x: 42, y: 571, v: 'Н контр' },
          { x: 42, y: 581, v: 'Утв' },
          { x: 76, y: 531, v: 'Редькин А В' },
          { x: 76, y: 541, v: 'Старцев Н Е' },
          { x: 76, y: 571, v: 'Петров В В' },
          { x: 288, y: 495, v: '000-100-020', size: 18, mid: true },
          { x: 239, y: 532, v: 'Проектирование адм.здания', size: 10, mid: true },
          { x: 324, y: 511, v: 'Лит', mid: true },
          { x: 356, y: 511, v: 'Масса', mid: true },
          { x: 391, y: 511, v: 'Масштаб', size: 7, mid: true },
          { x: 391, y: 532, v: '1:1', size: 10, mid: true },
          { x: 313, y: 551, v: 'Лист' },
          { x: 342, y: 551, v: '1' },
          { x: 355, y: 551, v: 'Листов' },
          { x: 394, y: 551, v: '3' },
        ]}
      />
    </g>
  );
}

function NextSheet({ page }: { page: number }) {
  return (
    <g>
      <path d="M40 562.5H170" stroke="#000" />
      <path
        d={frame + 'M40 553H409M54 553V582M74 553V582M120 553V582M150 553V582M170 553V582M40 573H170M389 553V582M389 563H409'}
        stroke="#0080ff"
        strokeWidth="2"
      />
      <Notes
        items={[
          ...sideNotes,
          ...columnNotes(580),
          { x: 279, y: 574, v: '000-100-020', size: 18, mid: true },
          { x: 399, y: 561, v: 'Лист', size: 7, mid: true },
          { x: 399, y: 577, v: String(page), size: 10, mid: true },
        ]}
      />
    </g>
  );
}

function Canvas() {
  return (
    <main className="relative flex-1 overflow-hidden bg-white">
      <svg className="absolute inset-0 size-full font-['Roboto','Liberation_Sans',sans-serif] italic" fill="none">
        <path d="M82.5 79.5H1337.5V671.5H82.5zM500.5 79.5V671.5M918.5 79.5V671.5" stroke="#000" />
        <g transform="translate(82 79)"><FirstSheet /></g>
        <g transform="translate(500 79)"><NextSheet page={2} /></g>
        <g transform="translate(918 79)"><NextSheet page={3} /></g>
        {/* начало координат */}
        <path d="M82.5 671V637M82 671.5H116M80.5 643.5L82.5 636L84.5 643.5zM108.5 669.5V673.5H112" stroke="#333" />
        <path d="M110 669L117 671.5L110 674z" fill="#333" />
        <g className="not-italic" fill="#333" fontSize="10">
          <text x="81" y="634">Y</text>
          <text x="117" y="671">X</text>
        </g>
      </svg>
      <SnapBar />
    </main>
  );
}

export default function App() {
  return (
    <div className="flex h-screen flex-col overflow-hidden bg-[#f1f1f1] font-['Noto_Sans','Open_Sans',sans-serif] text-[11px] text-[#2d2d2d]">
      <TitleBar />
      <TabBar />
      <Ribbon />
      <div className="flex min-h-0 flex-1">
        <SideBar />
        <TreePanel />
        <Canvas />
      </div>
    </div>
  );
}
